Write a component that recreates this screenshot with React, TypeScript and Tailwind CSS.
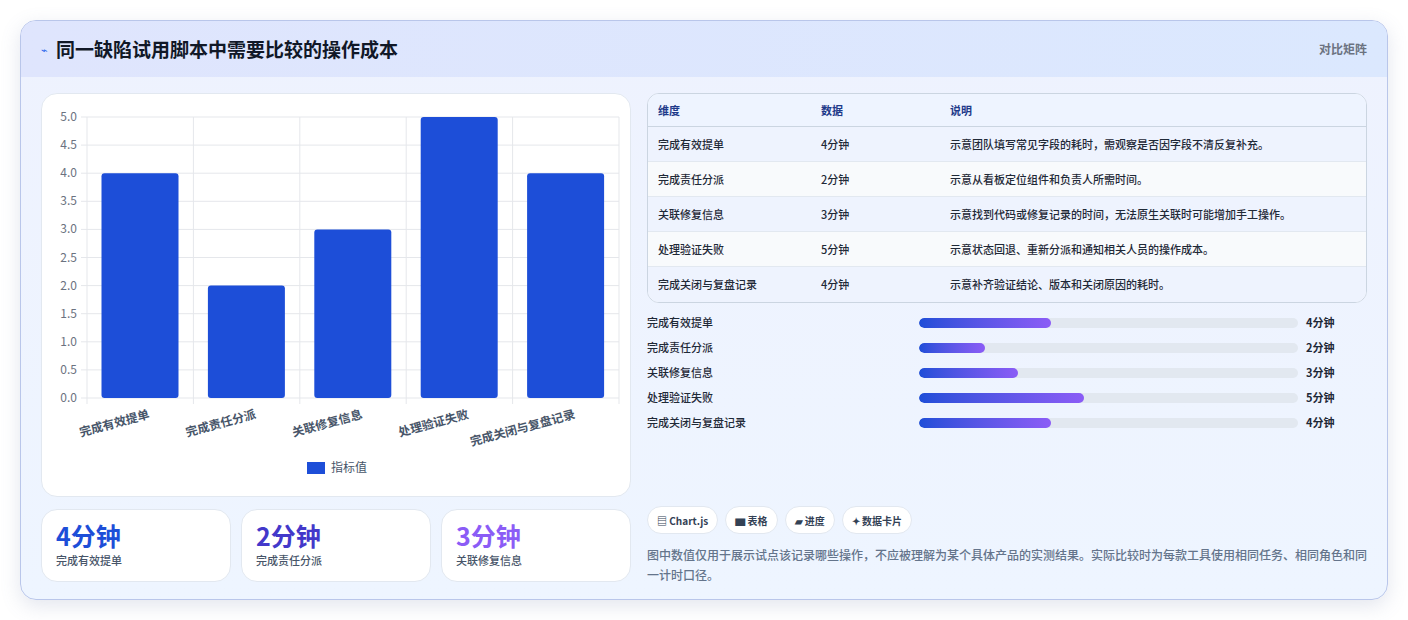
import React from "react";

const rows = [
  ["完成有效提单", 4, "示意团队填写常见字段的耗时，需观察是否因字段不清反复补充。"],
  ["完成责任分派", 2, "示意从看板定位组件和负责人所需时间。"],
  ["关联修复信息", 3, "示意找到代码或修复记录的时间，无法原生关联时可能增加手工操作。"],
  ["处理验证失败", 5, "示意状态回退、重新分派和通知相关人员的操作成本。"],
  ["完成关闭与复盘记录", 4, "示意补齐验证结论、版本和关闭原因的耗时。"],
] as const;

function Chart() {
  const x0 = 45, x1 = 577, y0 = 23, y1 = 304;
  const w = (x1 - x0) / 5;
  const ticks = [0, 0.5, 1, 1.5, 2, 2.5, 3, 3.5, 4, 4.5, 5];
  const Y = (v: number) => y1 - (v / 5) * (y1 - y0);
  return (
    <svg width="590" height="403" viewBox="0 0 590 403" className="block">
      {ticks.map((t) => (
        <g key={t}>
          <line x1={x0 - 6} x2={x1} y1={Y(t)} y2={Y(t)} stroke="#e5e7eb" />
          <text x={x0 - 10} y={Y(t) + 4} textAnchor="end" fontSize="12" fill="#6b7280">{t.toFixed(1)}</text>
        </g>
      ))}
      {[0, 1, 2, 3, 4, 5].map((i) => (
        <line key={i} x1={x0 + i * w} x2={x0 + i * w} y1={y0} y2={y1 + 6} stroke="#e5e7eb" />
      ))}
      {rows.map((r, i) => (
        <g key={i}>
          <rect x={x0 + i * w + 14.5} y={Y(r[1])} width={77} height={y1 - Y(r[1])} rx="3" fill="#1d4ed8" />
          <text transform={`translate(${x0 + i * w + w / 2 + 10},${y1 + 20}) rotate(-15)`} textAnchor="end" fontSize="12" fontWeight="600" fill="#475569">{r[0]}</text>
        </g>
      ))}
      <rect x="265" y="368" width="18" height="12" fill="#1d4ed8" />
      <text x="289" y="378" fontSize="12" fill="#475569">指标值</text>
    </svg>
  );
}

export default function App() {
  const font = { fontFamily: '"Noto Sans CJK SC", "Noto Sans", sans-serif' };
  return (
    <div className="w-[1408px] h-[620px] bg-white p-5" style={font}>
      <div className="w-[1368px] h-[580px] rounded-2xl border border-[#b9c6ea] bg-gradient-to-b from-[#eef2fe] to-[#eef5ff] shadow-[0_6px_20px_rgba(100,116,160,0.18)] overflow-hidden">
        <div className="h-[56px] bg-gradient-to-r from-[#dfe5fd] to-[#dbe8fe] flex items-center justify-between px-5">
          <div className="flex items-center gap-2">
            <span className="text-[#2563eb] text-[11px]">⌁</span>
            <span className="text-[19px] font-bold text-[#111827]">同一缺陷试用脚本中需要比较的操作成本</span>
          </div>
          <span className="text-[12px] font-semibold text-[#6b7280]">对比矩阵</span>
        </div>
        <div className="flex gap-4 px-5 pt-4">
          <div className="w-[590px] flex flex-col gap-3">
            <div className="h-[404px] bg-white rounded-2xl border border-[#e2e8f0]">
              <Chart />
            </div>
            <div className="grid grid-cols-3 gap-[10px]">
              {[["4分钟", "完成有效提单", "text-[#1d4ed8]"], ["2分钟", "完成责任分派", "text-[#4338ca]"], ["3分钟", "关联修复信息", "text-[#8b5cf6]"]].map(([v, l, c]) => (
                <div key={l} className="h-[73px] bg-white rounded-2xl border border-[#e2e8f0] px-[14px] pt-[8px]">
                  <div className={`text-[25px] font-bold leading-[34px] ${c}`}>{v}</div>
                  <div className="text-[11px] text-[#475569] font-medium">{l}</div>
                </div>
              ))}
            </div>
          </div>
          <div className="flex-1 flex flex-col">
            <div className="rounded-xl border border-[#cbd5e1] overflow-hidden bg-white">
              <div className="flex h-[33px] items-center bg-[#eef4ff] text-[11px] font-bold text-[#1e3a8a] border-b border-[#cbd5e1]">
                <div className="w-[173px] pl-[10px]">维度</div>
                <div className="w-[129px]">数据</div>
                <div className="flex-1">说明</div>
              </div>
              {rows.map((r, i) => (
                <div key={i} className={`flex h-[35px] items-center text-[11px] font-medium text-[#1f2937] ${i % 2 === 0 ? "bg-[#eef3fe]" : "bg-[#f8fafc]"} ${i < 4 ? "border-b border-[#e2e8f0]" : ""}`}>
                  <div className="w-[173px] pl-[10px]">{r[0]}</div>
                  <div className="w-[129px]">{r[1]}分钟</div>
                  <div className="flex-1">{r[2]}</div>
                </div>
              ))}
            </div>
            <div className="flex flex-col gap-[10px] mt-[12px]">
              {rows.map((r, i) => (
                <div key={i} className="flex items-center h-[15px] text-[11px] font-medium text-[#1f2937]">
                  <div className="w-[272px]">{r[0]}</div>
                  <div className="w-[379px] h-[10px] rounded-full bg-[#e2e8f0] overflow-hidden">
                    <div className="h-full rounded-full bg-gradient-to-r from-[#1d4ed8] to-[#8b5cf6]" style={{ width: `${r[1] * 8.7}%` }} />
                  </div>
                  <div className="ml-2 font-bold">{r[1]}分钟</div>
                </div>
              ))}
            </div>
            <div className="flex gap-[7px] mt-[76px]">
              {["▤ Chart.js", "▆ 表格", "▰ 进度", "✦ 数据卡片"].map((t) => (
                <span key={t} className="h-[28px] px-[9px] flex items-center rounded-full bg-white border border-[#e2e8f0] text-[10px] font-bold text-[#334155]">{t}</span>
              ))}
            </div>
            <p className="mt-[11px] text-[12px] leading-[20px] text-[#64748b] font-medium">图中数值仅用于展示试点该记录哪些操作，不应被理解为某个具体产品的实测结果。实际比较时为每款工具使用相同任务、相同角色和同一计时口径。</p>
          </div>
        </div>
      </div>
    </div>
  );
}
